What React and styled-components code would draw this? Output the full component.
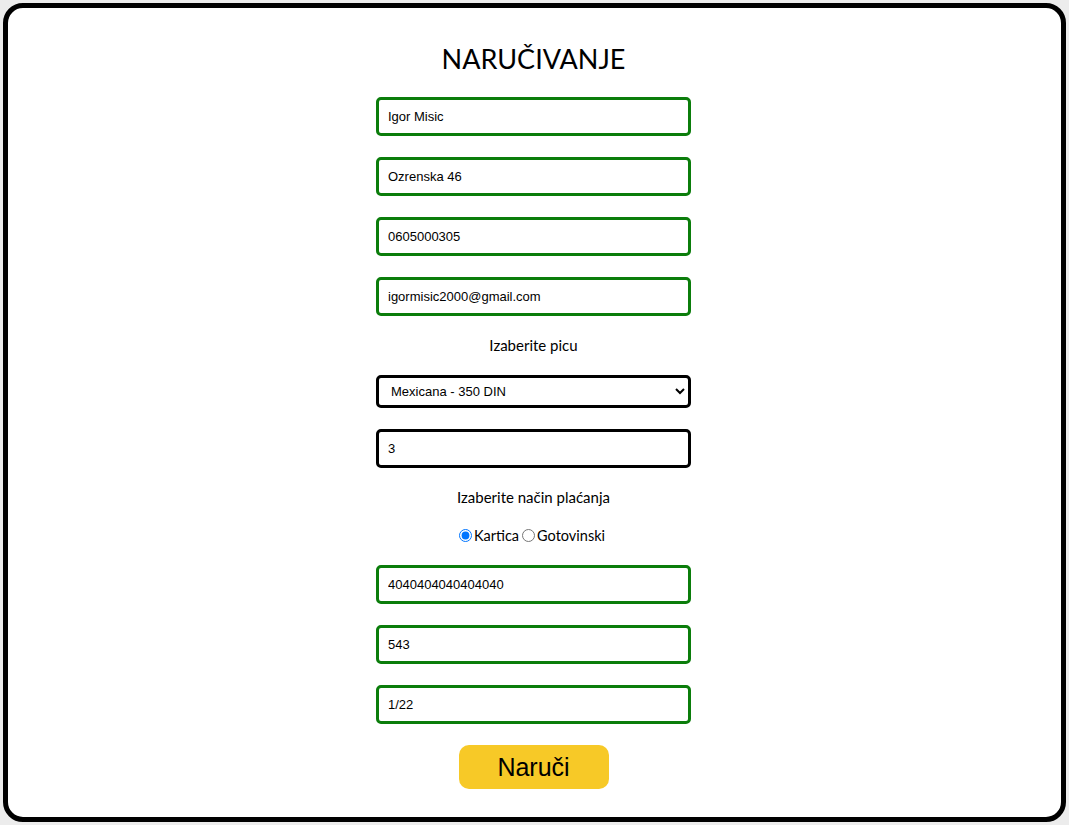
import React from 'react';
import styled, { createGlobalStyle } from 'styled-components';

const GlobalStyle = createGlobalStyle`
    html, body {
        margin: 0;
        padding: 0;
        background: #ececec;
    }
    * {
        box-sizing: border-box;
    }
`;

const Card = styled.div`
    margin: 3px;
    height: calc(100vh - 6px);
    background: #fff;
    border: 5px solid #000;
    border-radius: 20px;
    display: flex;
    justify-content: center;
    padding-right: 2px;
`;

const Form = styled.form`
    display: flex;
    flex-direction: column;
    align-items: center;
    gap: 21px;
    padding-top: 33px;
    width: 315px;
`;

const Title = styled.h1`
    margin: 0;
    font-family: Lato, 'Open Sans', sans-serif;
    font-weight: 400;
    font-size: 27px;
    line-height: 35px;
    color: #000;
`;

const Field = styled.input`
    width: 315px;
    height: 39px;
    border: 3px solid ${props => props.valid ? '#0b7d0b' : '#000'};
    border-radius: 5px;
    padding: 0 9px;
    font-family: 'Liberation Sans', Arial, sans-serif;
    font-size: 13px;
    color: #000;
    background: #fff;
    outline: none;
`;

const Select = styled.select`
    width: 315px;
    height: 33px;
    border: 3px solid #000;
    border-radius: 5px;
    padding: 0 8px;
    font-family: 'Liberation Sans', Arial, sans-serif;
    font-size: 13px;
    color: #000;
    background: #fff;
    outline: none;
`;

const Label = styled.div`
    font-family: Lato, 'Open Sans', sans-serif;
    font-size: 15px;
    line-height: 17px;
    color: #000;
`;

const RadioRow = styled.div`
    display: flex;
    align-items: center;
    font-family: Lato, 'Open Sans', sans-serif;
    font-size: 14.5px;
    line-height: 17px;
    color: #000;

    input {
        margin: 0 2px 0 0;
        width: 13px;
        height: 13px;
    }
    label {
        margin-right: 3px;
    }
`;

const SubmitButton = styled.button`
    width: 150px;
    height: 44px;
    border: none;
    border-radius: 10px;
    background: #f7c927;
    font-family: 'Liberation Sans', Arial, sans-serif;
    font-size: 25px;
    color: #000;
    cursor: pointer;
`;

const fields = [
    'Igor Misic',
    'Ozrenska 46',
    '0605000305',
    'igormisic2000@gmail.com',
];

const cardFields = ['4040404040404040', '543', '1/22'];

export default function App() {
    return (
        <>
            <GlobalStyle />
            <Card>
                <Form onSubmit={e => e.preventDefault()}>
                    <Title>NARUČIVANJE</Title>
                    {fields.map((v, i) => (
                        <Field key={i} valid defaultValue={v} />
                    ))}
                    <Label>Izaberite picu</Label>
                    <Select defaultValue="mexicana">
                        <option value="mexicana">Mexicana - 350 DIN</option>
                        <option value="capricciosa">Capricciosa - 320 DIN</option>
                        <option value="margherita">Margherita - 280 DIN</option>
                    </Select>
                    <Field defaultValue="3" />
                    <Label>Izaberite način plaćanja</Label>
                    <RadioRow>
                        <input type="radio" name="pay" id="kartica" defaultChecked />
                        <label htmlFor="kartica">Kartica</label>
                        <input type="radio" name="pay" id="gotovina" />
                        <label htmlFor="gotovina">Gotovinski</label>
                    </RadioRow>
                    {cardFields.map((v, i) => (
                        <Field key={i} valid defaultValue={v} />
                    ))}
                    <SubmitButton type="submit">Naruči</SubmitButton>
                </Form>
            </Card>
        </>
    );
}
